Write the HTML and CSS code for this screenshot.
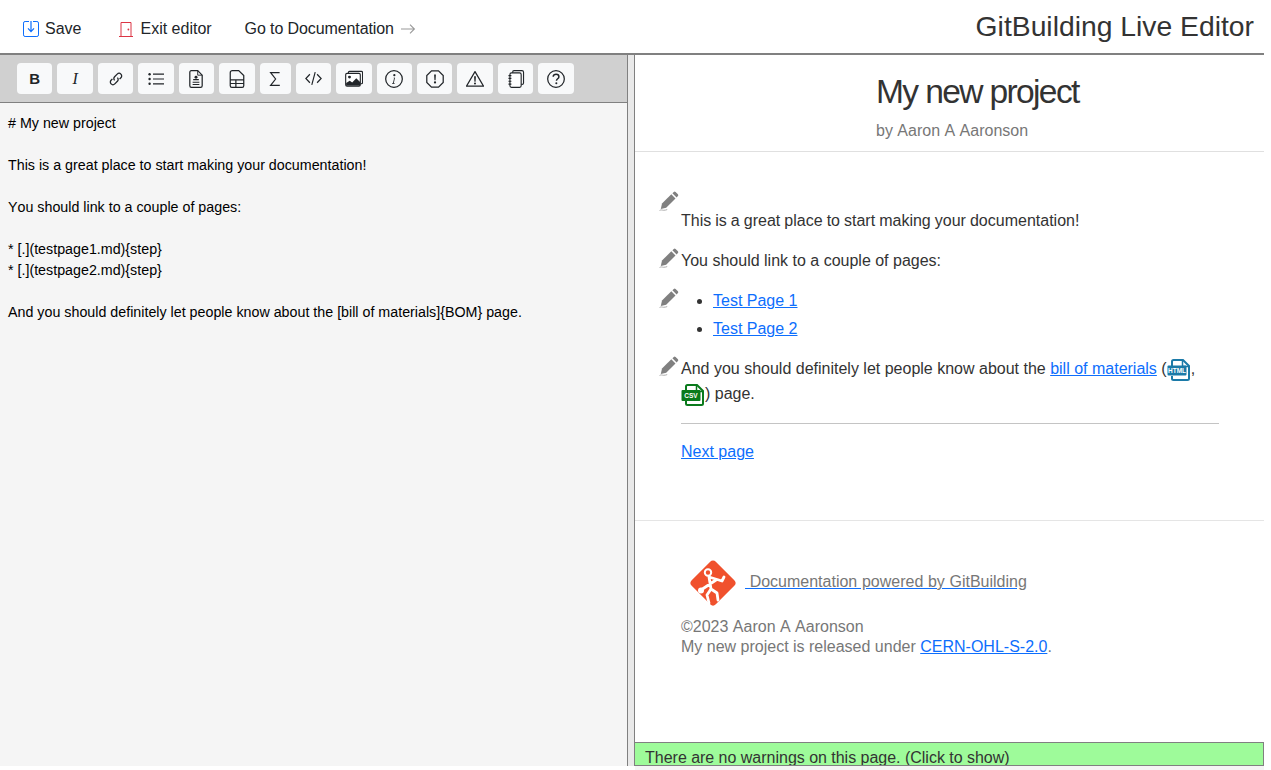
FILE: index.html
```html
<!DOCTYPE html>
<html lang="en">
<head>
<meta charset="utf-8">
<title>GitBuilding Live Editor</title>
<link rel="stylesheet" href="styles.css">
</head>
<body>
<div class="app">
  <header class="topbar">
    <nav class="topnav">
      <a class="navitem save"><svg class="navicon" viewBox="0 0 16 16"><rect x="0.5" y="0.5" width="15" height="15" rx="1.6" fill="none" stroke="#0d6efd"/><path d="M6 0h4v1H6z" fill="#fff"/><path d="M8 0v10.400M5 7.400 8 10.600 11 7.400" fill="none" stroke="#0d6efd" stroke-width="1.200"/></svg>Save</a>
      <a class="navitem exit"><svg class="navicon" viewBox="0 0 16 16"><path d="M1 15.500h14M3 15.500V1.500h10v14" fill="none" stroke="#dc3545"/><circle cx="10.400" cy="8.500" r="0.900" fill="#dc3545"/></svg>Exit editor</a>
      <a class="navitem docs">Go to Documentation<svg class="arrow" viewBox="0 0 16 16"><path d="M1 8h13.400M10 3.600 14.400 8 10 12.400" fill="none" stroke="#999" stroke-width="1.100"/></svg></a>
    </nav>
    <div class="apptitle">GitBuilding Live Editor</div>
  </header>
  <main class="panes">
    <section class="editor">
      <div class="toolbar">
        <button class="tool"><b class="bold">B</b></button>
        <button class="tool"><i class="ital">I</i></button>
        <button class="tool"><svg class="ic" viewBox="0 0 16 16"><g fill="none" stroke="#212529" stroke-width="1.300"><path d="M6.600 9.400a2.600 2.600 0 0 1 0-3.700l2.600-2.600a2.600 2.600 0 0 1 3.700 3.700l-1.300 1.300"/><path d="M9.400 6.600a2.600 2.600 0 0 1 0 3.700l-2.600 2.600a2.600 2.600 0 0 1-3.700-3.700l1.300-1.300"/></g></svg></button>
        <button class="tool"><svg class="ic" viewBox="0 0 16 16"><g fill="#212529"><circle cx="1.600" cy="3.200" r="1.200"/><circle cx="1.600" cy="8" r="1.200"/><circle cx="1.600" cy="12.800" r="1.200"/><path d="M5 2.600h11v1.200H5zM5 7.400h11v1.200H5zM5 12.200h11v1.200H5z"/></g></svg></button>
        <button class="tool"><svg class="ic big" viewBox="0 0 16 16"><path d="M3.800 .6h5.700L13.500 4.600v9.400a1.400 1.400 0 0 1-1.400 1.400H3.900A1.400 1.400 0 0 1 2.500 14V1.900a1.300 1.300 0 0 1 1.300-1.300z" fill="none" stroke="#212529" stroke-width="1.100"/><path d="M9.500 .6v4h4" fill="none" stroke="#212529" stroke-width=".8"/><path d="M5.500 8h5v1.100h-5zM5 10.400h6v1h-6zM5 12.400h6v1H5z" fill="#212529"/><circle cx="8" cy="6.400" r="1.300" fill="#212529"/></svg></button>
        <button class="tool"><svg class="ic big" viewBox="0 0 16 16"><path d="M3.800 .6h5.700L14 5v9a1.400 1.400 0 0 1-1.400 1.400H3.400A1.400 1.400 0 0 1 2 14V2.400A1.800 1.800 0 0 1 3.800 .6z M2 8.800h12M2 12h12M7 8.800v6.600" fill="none" stroke="#212529" stroke-width="1.100"/></svg></button>
        <button class="tool narrow"><svg class="ic" viewBox="0 0 16 16"><path d="M12.600 1.600H3.600L8.600 8l-5 6.400h9.200" fill="none" stroke="#212529" stroke-width="1.200"/></svg></button>
        <button class="tool"><svg class="ic wide" viewBox="0 0 16 16"><path d="M4.600 4 .8 8l3.800 4M11.400 4l3.800 4-3.800 4M9.600 2 6.400 14" fill="none" stroke="#212529" stroke-width="1.100"/></svg></button>
        <button class="tool"><svg class="ic big" viewBox="0 0 16 16"><rect x="0.600" y="3" width="13" height="11.400" rx="1.200" fill="#fff" stroke="#212529"/><path d="M3 3V2.200A1 1 0 0 1 4 1.200h10.600a1 1 0 0 1 1 1v9a1 1 0 0 1-1 1H14" fill="none" stroke="#212529"/><path d="M1 14v-2.400l3.200-2 2.200 1.400L10 7.400l3.400 3.200V14z" fill="#212529"/><circle cx="4" cy="6.300" r="1.300" fill="#212529"/></svg></button>
        <button class="tool"><svg class="ic big" viewBox="0 0 16 16"><circle cx="8" cy="8" r="7.400" fill="none" stroke="#212529" stroke-width="1.100"/><path d="M8.900 6.700 7.900 11.300c-.1.500.1.700.9.500v.5l-2.500.1v-.4c.6-.1.800-.3.900-.8l.8-3.600c.1-.5-.2-.6-.8-.5V7.100z" fill="#212529"/><circle cx="8.300" cy="4.600" r="1" fill="#212529"/></svg></button>
        <button class="tool"><svg class="ic big" viewBox="0 0 16 16"><path d="M4.900.7h6.200l4.200 4.200v6.200l-4.200 4.200H4.900L.7 11.100V4.900z" fill="none" stroke="#212529" stroke-width="1.100"/><path d="M7.200 4h1.600L8.500 9h-1z" fill="#212529"/><circle cx="8" cy="11" r="1" fill="#212529"/></svg></button>
        <button class="tool"><svg class="ic big" viewBox="0 0 16 16"><path d="M8 1.400 15.600 14.400H.4z" fill="none" stroke="#212529" stroke-width="1.100" stroke-linejoin="round"/><path d="M7.200 5.600h1.600L8.500 10.400h-1z" fill="#212529"/><circle cx="8" cy="12" r=".9" fill="#212529"/></svg></button>
        <button class="tool"><svg class="ic big" viewBox="0 0 16 16"><rect x="2.600" y="2.600" width="10" height="12.800" rx="1.400" fill="#fff" stroke="#212529"/><path d="M5 2.400V1.900A1.300 1.300 0 0 1 6.300.6h7A1.400 1.400 0 0 1 14.700 2v9.500a1.300 1.300 0 0 1-1.300 1.300h-.7" fill="none" stroke="#212529"/><path d="M1.300 5h2.600M1.300 7.500h2.600M1.300 10h2.600M1.300 12.500h2.600" stroke="#212529" stroke-width="1.100"/></svg></button>
        <button class="tool"><svg class="ic big" viewBox="0 0 16 16"><circle cx="8" cy="8" r="7.400" fill="none" stroke="#212529" stroke-width="1.100"/><path d="M5.500 6.100c0-1.500 1.100-2.400 2.600-2.400 1.400 0 2.500.9 2.500 2.200 0 1.900-2.200 1.900-2.200 3.700" fill="none" stroke="#212529" stroke-width="1.300"/><circle cx="8.300" cy="11.800" r=".9" fill="#212529"/></svg></button>
      </div>
      <pre class="source"># My new project

This is a great place to start making your documentation!

You should link to a couple of pages:

* [.](testpage1.md){step}
* [.](testpage2.md){step}

And you should definitely let people know about the [bill of materials]{BOM} page.</pre>
    </section>
    <div class="divider"></div>
    <section class="preview">
      <div class="doc">
        <div class="dochead">
          <div class="headinner">
            <h1 class="doctitle">My new project</h1>
            <div class="byline">by Aaron A Aaronson</div>
          </div>
        </div>
        <article class="docbody">
          <p class="block tight"><svg class="pencil high" viewBox="0 0 20 20"><use href="#pencil"/></svg>This is a great place to start making your documentation!</p>
          <p class="block"><svg class="pencil" viewBox="0 0 20 20"><use href="#pencil"/></svg>You should link to a couple of pages:</p>
          <div class="block">
            <svg class="pencil" viewBox="0 0 20 20"><use href="#pencil"/></svg>
            <ul class="pages">
              <li><a class="link">Test Page 1</a></li>
              <li><a class="link">Test Page 2</a></li>
            </ul>
          </div>
          <p class="block"><svg class="pencil" viewBox="0 0 20 20"><use href="#pencil"/></svg>And you should definitely let people know about the <a class="link">bill of materials</a> (<svg class="fileicon" viewBox="0 0 24 22"><path d="M5 8V2.500A1.500 1.500 0 0 1 6.500 1H16l6 6v12.500a1.500 1.500 0 0 1-1.500 1.500h-14A1.500 1.500 0 0 1 5 19.500V17" fill="#fff" stroke="#1b7aa8" stroke-width="2"/><path d="M15.500 1v6.500H22" fill="none" stroke="#1b7aa8" stroke-width="1.500"/><rect x="0.500" y="6.500" width="19" height="10" rx="1" fill="#1b7aa8"/><text x="10" y="14" class="filelabel">HTML</text></svg>,<br><svg class="fileicon" viewBox="0 0 24 22"><path d="M5 6V2.500A1.500 1.500 0 0 1 6.500 1H16l6 6v12.500a1.500 1.500 0 0 1-1.500 1.500h-14A1.500 1.500 0 0 1 5 19.500V17" fill="#fff" stroke="#0a7a1c" stroke-width="2"/><path d="M15.500 1v6.500H22" fill="none" stroke="#0a7a1c" stroke-width="1.500"/><rect x="0.500" y="6" width="19" height="11" rx="1" fill="#0a7a1c"/><text x="10" y="14" class="filelabel">CSV</text></svg>) page.</p>
          <hr class="rule">
          <p class="next"><a class="link">Next page</a></p>
        </article>
        <footer class="docfoot">
          <a class="powered"><svg class="logo" viewBox="0 0 64 64"><path d="M32 9.500a4 4 0 0 1 2.800 1.200L53.300 29.200a4 4 0 0 1 0 5.600L34.800 53.300a4 4 0 0 1-5.600 0L10.700 34.800a4 4 0 0 1 0-5.600L29.200 10.700A4 4 0 0 1 32 9.500z" fill="#f0512d"/><g fill="none" stroke="#fff" stroke-width="2.800" stroke-linecap="round" stroke-linejoin="round"><path d="M28 26 30 38 26 44 28 52M30 38 36 42 37 49M28 26 41 30 43 26M20 39 35 29"/></g><circle cx="27" cy="21.500" r="3.200" fill="none" stroke="#fff" stroke-width="2"/><circle cx="20" cy="39.500" r="3" fill="#fff"/></svg> Documentation powered by GitBuilding</a>
          <p class="legal"><span class="holder">©2023 Aaron A Aaronson</span><br>My new project is released under <a class="link">CERN-OHL-S-2.0</a>.</p>
        </footer>
      </div>
      <div class="warnings">There are no warnings on this page. (Click to show)</div>
    </section>
  </main>
  <div class="understrip"></div>
</div>
<svg class="defs" aria-hidden="true"><defs><g id="pencil"><path d="M12.300 3.300 16.500 7.500 7.200 16.800 1.800 18 3 12.600z" fill="#808080"/><path d="M13.400 2.200 14.800.9a1.300 1.300 0 0 1 1.800 0l2.300 2.300a1.300 1.300 0 0 1 0 1.800L17.600 6.400z" fill="#808080"/><path d="M.5 19.600c1.500-1.200 2.800-.4 4-.3 1.500.1 2.600-.5 3.700-.7" fill="none" stroke="#999" stroke-width=".8"/></g></defs></svg>
</body>
</html>
```
FILE: styles.css
```css
html, body { margin: 0; padding: 0; background: #fff; }
body { font-family: "Liberation Sans", Arial, sans-serif; color: #212529; font-size: 16px; overflow: hidden; }
.defs { display: none; }
.app { width: 1264px; height: 770px; }

.topbar { height: 53px; border-bottom: 2px solid #808080; display: flex; justify-content: space-between; align-items: center; padding: 0 10px 0 23px; }
.topnav { display: flex; align-items: center; gap: 33px; padding-top: 5px; }
.navitem { display: flex; align-items: center; color: #212529; line-height: 24px; }
.navicon { width: 16px; height: 16px; margin-right: 6px; margin-top: -1px; }
.exit { margin-left: 4px; }
.docs { letter-spacing: -0.1px; }
.arrow { width: 16px; height: 16px; margin-left: 6px; }
.apptitle { font-size: 28.3px; color: #333; line-height: 32px; margin-bottom: 2px; font-kerning: none; }

.panes { display: grid; grid-template-columns: 627px 8px 629px; height: 711px; }
.editor { background: #f5f5f5; display: flex; flex-direction: column; min-width: 0; }
.toolbar { height: 48px; box-sizing: border-box; background: #d0d0d0; border-bottom: 1px solid #808080; display: flex; align-items: flex-start; gap: 5px; padding: 8px 0 0 17px; }
.tool { width: 35.45px; height: 31px; box-sizing: border-box; padding: 0; border: 0; border-radius: 4px; background: #f8f9fa; display: flex; align-items: center; justify-content: center; flex: none; }
.tool.narrow { width: 31px; }
.ic { width: 16px; height: 16px; }
.ic.wide { width: 17px; height: 17px; }
.ic.big { width: 18px; height: 18px; }
.bold { font-size: 15px; color: #212529; font-family: "Liberation Sans", Arial, sans-serif; }
.ital { font-size: 16px; color: #212529; font-family: "Liberation Serif", serif; }
.source { margin: 0; padding: 10px 8px; font-family: "Liberation Sans", Arial, sans-serif; font-size: 14.27px; line-height: 21px; color: #000; white-space: pre-wrap; font-kerning: none; }

.divider { background: #e9e9e9; border-left: 1px solid #808080; border-right: 1px solid #808080; }

.preview { display: flex; flex-direction: column; min-width: 0; }
.doc { flex: 1; min-height: 0; overflow: hidden; }
.dochead { height: 96px; border-bottom: 1px solid #e0e0e0; padding-left: 241px; }
.doctitle { margin: 0; padding-top: 18px; font-size: 33.6px; line-height: 38px; font-weight: 400; color: #333; letter-spacing: -1.65px; font-kerning: none; }
.byline { margin-top: 10px; color: #777; line-height: 20px; font-kerning: none; }

.docbody { padding: 56px 45px 0 46px; height: 312px; border-bottom: 1px solid #e5e5e5; color: #333; line-height: 25px; }
.block { position: relative; margin: 0 0 15px; }
.tight { word-spacing: -0.4px; }
.pencil { position: absolute; left: -22px; top: 0; width: 20px; height: 20px; }
.pencil.high { top: -17px; }
.pages { margin: 0; padding-left: 32px; }
.pages li { margin-bottom: 3px; }
.pages li:last-child { margin-bottom: 0; }
.link { color: #0d6efd; text-decoration: underline; }
.fileicon { width: 24px; height: 22px; vertical-align: -7px; }
.filelabel { font: bold 6.5px "Liberation Sans", Arial, sans-serif; fill: #fff; text-anchor: middle; }
.rule { margin: 17px 0 15px; border: 0; border-top: 1px solid #c4c4c4; }
.next { margin: 0; }

.docfoot { padding: 29px 46px 0; color: #777; }
.powered { color: #777; text-decoration: underline; text-decoration-color: #0d6efd; display: block; line-height: 64px; height: 64px; word-spacing: 0.2px; }
.logo { width: 64px; height: 64px; vertical-align: middle; }
.legal { margin: 3px 0 0; line-height: 20px; }
.holder { font-kerning: none; }

.warnings { height: 24px; box-sizing: border-box; flex: none; margin-left: -1px; background: #9efb9a; border: 1px solid #808080; padding: 6px 10px 0; line-height: 18px; color: #333; overflow: hidden; word-spacing: -0.1px; }
.understrip { height: 4px; margin-left: 635px; background: #f5f5f5; }
```
